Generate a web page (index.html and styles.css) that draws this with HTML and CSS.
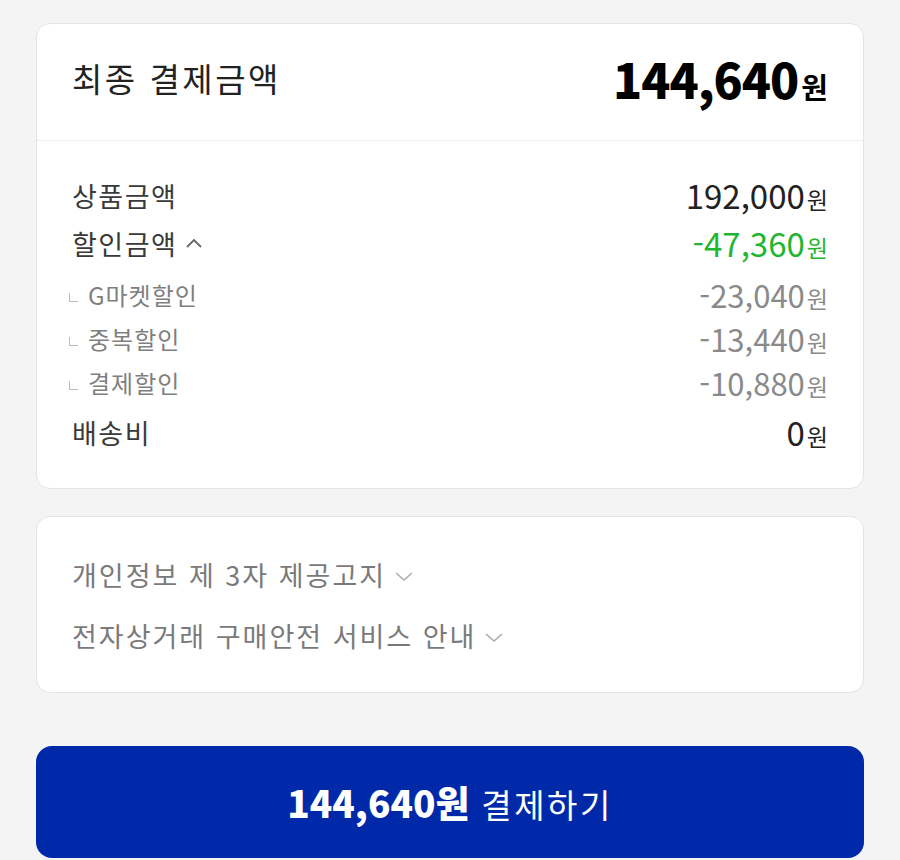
FILE: index.html
```html
<!DOCTYPE html>
<html lang="ko">

<head>
    <meta charset="UTF-8">
    <title>최종 결제금액</title>
    <link rel="stylesheet" href="styles.css">
</head>

<body>

    <div class="card summary">
        <div class="summary-head">
            <span class="head-title">최종 결제금액</span>
            <span class="head-price">144,640<small>원</small></span>
        </div>
        <div class="summary-body">
            <div class="row">
                <span class="label">상품금액</span>
                <span class="price">192,000<small>원</small></span>
            </div>
            <div class="row">
                <span class="label">할인금액
                    <svg class="caret-up" width="18" height="12" viewBox="0 0 18 12">
                        <path d="M2 10 L9 3 L16 10" fill="none" stroke="#666" stroke-width="1.8" />
                    </svg>
                </span>
                <span class="price green">-47,360<small>원</small></span>
            </div>
            <div class="row sub">
                <span class="label"><i class="mark"></i>G마켓할인</span>
                <span class="price">-23,040<small>원</small></span>
            </div>
            <div class="row sub">
                <span class="label"><i class="mark"></i>중복할인</span>
                <span class="price">-13,440<small>원</small></span>
            </div>
            <div class="row sub">
                <span class="label"><i class="mark"></i>결제할인</span>
                <span class="price">-10,880<small>원</small></span>
            </div>
            <div class="row last">
                <span class="label">배송비</span>
                <span class="price">0<small>원</small></span>
            </div>
        </div>
    </div>

    <div class="card notice">
        <div class="notice-item">개인정보 제 3자 제공고지
            <svg class="caret-down" width="20" height="12" viewBox="0 0 20 12">
                <path d="M2 3 L10 10 L18 3" fill="none" stroke="#aaa" stroke-width="1.6" />
            </svg>
        </div>
        <div class="notice-item">전자상거래 구매안전 서비스 안내
            <svg class="caret-down" width="20" height="12" viewBox="0 0 20 12">
                <path d="M2 3 L10 10 L18 3" fill="none" stroke="#aaa" stroke-width="1.6" />
            </svg>
        </div>
    </div>

    <button class="pay-btn" type="button"><b>144,640원</b> 결제하기</button>

</body>

</html>
```

FILE: styles.css
```css
body {
    margin: 0;
    padding: 23px 36px 0;
    font-family: "Noto Sans CJK KR", "Noto Sans", sans-serif;
    background-color: #f4f4f4;
    color: #222222;
    height: 860px;
    box-sizing: border-box;
    overflow: hidden;
}

.card {
    background-color: #ffffff;
    border: 1px solid #e4e4e4;
    border-radius: 14px;
}

.summary-head {
    display: flex;
    justify-content: space-between;
    align-items: center;
    height: 117px;
    padding: 0 35px 8px;
    box-sizing: border-box;
    border-bottom: 1px solid #ececec;
}

.head-title {
    font-size: 33px;
    letter-spacing: 2.5px;
    color: #222222;
}

.head-price {
    font-size: 48px;
    font-weight: 900;
    color: #000000;
    letter-spacing: -1px;
}

.head-price small {
    font-size: 29px;
    font-weight: 700;
    margin-left: 3px;
    letter-spacing: 0;
}

.summary-body {
    padding: 30px 35px 32px;
}

.row {
    display: flex;
    justify-content: space-between;
    align-items: center;
    height: 48px;
}

.label {
    font-size: 27px;
    letter-spacing: 1.5px;
    color: #3a3a3a;
    display: flex;
    align-items: center;
}

.caret-up {
    margin-left: 8px;
}

.price {
    font-size: 33px;
    color: #222222;
}

.price small {
    font-size: 23px;
    margin-left: 2px;
}

.price.green {
    color: #22b52f;
}

.row.sub {
    height: 44px;
}

.row.sub:nth-child(3) {
    margin-top: 5px;
}

.row.sub .label {
    font-size: 24px;
    letter-spacing: 1px;
    color: #7f7f7f;
}

.row.sub .price {
    font-size: 31px;
    color: #8a8a8a;
}

.row.sub .price small {
    font-size: 23px;
}

.mark {
    display: inline-block;
    width: 8px;
    height: 8px;
    border-left: 1px solid #bdbdbd;
    border-bottom: 1px solid #bdbdbd;
    margin: 6px 10px 0 -3px;
}

.row.last {
    margin-top: 4px;
}

.notice {
    margin-top: 27px;
    padding: 37px 35px 37px;
    display: flex;
    flex-direction: column;
    gap: 21px;
}

.notice-item {
    display: flex;
    align-items: center;
    height: 40px;
    font-size: 27px;
    letter-spacing: 2px;
    color: #7a7a7a;
}

.caret-down {
    margin-left: 8px;
    margin-top: 4px;
}

.pay-btn {
    display: block;
    width: 100%;
    height: 112px;
    margin-top: 53px;
    background-color: #0029a9;
    color: #ffffff;
    border: none;
    border-radius: 16px;
    font-family: "Noto Sans CJK KR", "Noto Sans", sans-serif;
    font-size: 33px;
    letter-spacing: 2.5px;
    cursor: pointer;
}

.pay-btn b {
    font-size: 37px;
    font-weight: 900;
    letter-spacing: 0;
}
```
